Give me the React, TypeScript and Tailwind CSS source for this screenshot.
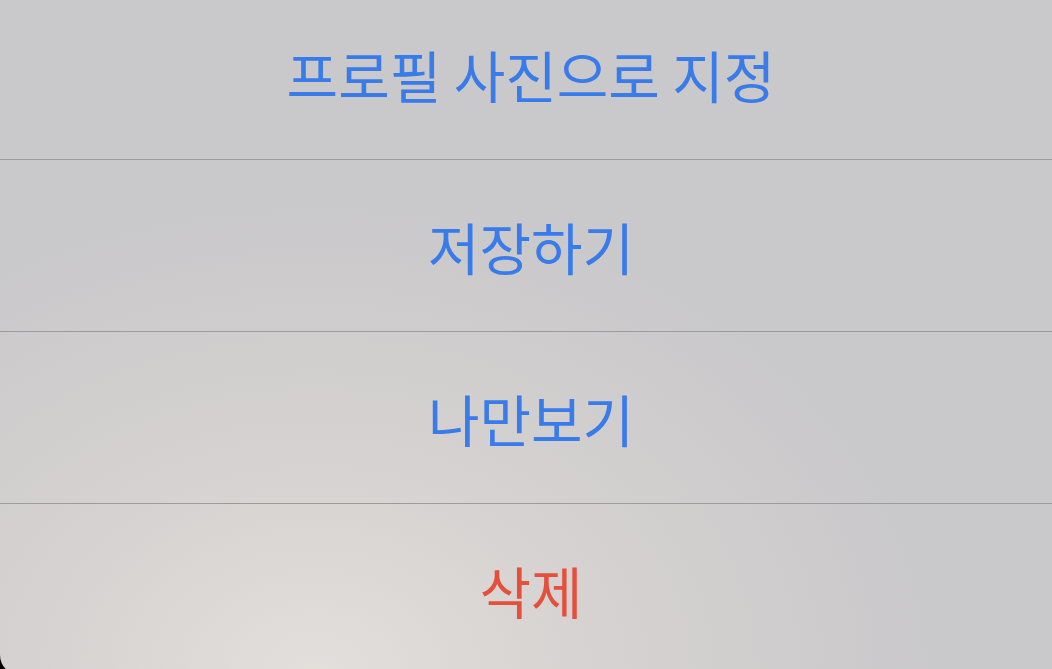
const ROWS = [
  { label: '프로필 사진으로 지정', color: 'text-[#3a7bea]' },
  { label: '저장하기', color: 'text-[#3a7bea]' },
  { label: '나만보기', color: 'text-[#3a7bea]' },
  { label: '삭제', color: 'text-[#e5503d]' },
];

export default function App() {
  return (
    <div className="w-[1052px] h-[669px] overflow-hidden bg-black">
      <div
        className="-mt-[12px] flex flex-col rounded-bl-[20px] bg-[radial-gradient(ellipse_60%_70%_at_30%_100%,#e3dfdb_0%,#d6d2d1_45%,#c9c8ca_100%)]"
        style={{ fontFamily: '"Noto Sans CJK KR", "Noto Sans", sans-serif' }}
      >
        {ROWS.map((r, i) => (
          <div key={r.label} className={i > 0 ? 'border-t border-[#9c9b9d]' : ''}>
            <div className={`h-[171px] pl-[10px] flex items-center justify-center text-[56px] leading-none ${r.color}`}>
              {r.label}
            </div>
          </div>
        ))}
      </div>
    </div>
  );
}
